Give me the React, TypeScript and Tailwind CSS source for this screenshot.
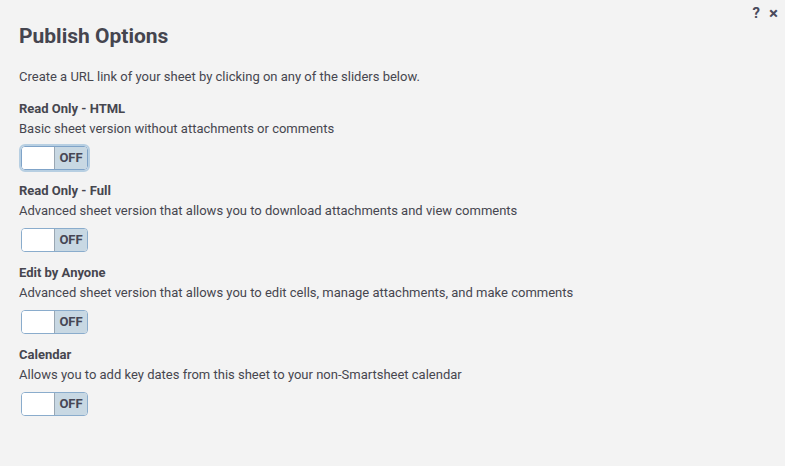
import { ReactElement } from 'react'

type Option = {
  title: string
  description: string
  focused?: boolean
}

const options: Option[] = [
  {
    title: 'Read Only - HTML',
    description: 'Basic sheet version without attachments or comments',
    focused: true,
  },
  {
    title: 'Read Only - Full',
    description:
      'Advanced sheet version that allows you to download attachments and view comments',
  },
  {
    title: 'Edit by Anyone',
    description:
      'Advanced sheet version that allows you to edit cells, manage attachments, and make comments',
  },
  {
    title: 'Calendar',
    description:
      'Allows you to add key dates from this sheet to your non-Smartsheet calendar',
  },
]

const Toggle = ({ focused }: { focused?: boolean }): ReactElement => {
  return (
    <div
      className={
        focused
          ? 'flex h-[24px] w-[67px] rounded-[4px] border border-[#7fa3c8] bg-white outline outline-2 outline-[#b7cfe2]'
          : 'flex h-[24px] w-[67px] rounded-[4px] border border-[#8aaccc] bg-white'
      }
    >
      <div className="w-[33px] rounded-l-[3px] border-r border-[#9aa7b3] bg-white" />
      <div className="flex flex-1 items-center justify-center rounded-r-[3px] bg-[#c8d8e3] text-[13px] font-bold text-[#464654]">
        OFF
      </div>
    </div>
  )
}

export default function App(): ReactElement {
  return (
    <div className="relative h-[466px] w-[785px] bg-[#f3f3f3] font-['Roboto',sans-serif] text-[#46464f]">
      <div className="absolute right-[7px] top-[3px] flex items-center gap-[9px] text-[#4a4a5c]">
        <span className="text-[15px] font-bold leading-[20px]">?</span>
        <span className="text-[17px] font-bold leading-[20px]">×</span>
      </div>
      <div className="px-[19px] pt-[24px]">
        <h1 className="text-[21px] font-bold leading-[24px] text-[#45454f]">
          Publish Options
        </h1>
        <p className="mt-[19px] text-[13px] leading-[20px]">
          Create a URL link of your sheet by clicking on any of the sliders below.
        </p>
        <div className="mt-[11px] flex flex-col gap-[10px]">
          {options.map((item, index) => (
            <div key={index} className="flex flex-col">
              <div className="pt-[1px] text-[13px] font-bold leading-[20px]">{item.title}</div>
              <div className="text-[13px] leading-[20px]">{item.description}</div>
              <div className="mt-[7px] pl-[2px]">
                <Toggle focused={item.focused} />
              </div>
            </div>
          ))}
        </div>
      </div>
    </div>
  )
}
